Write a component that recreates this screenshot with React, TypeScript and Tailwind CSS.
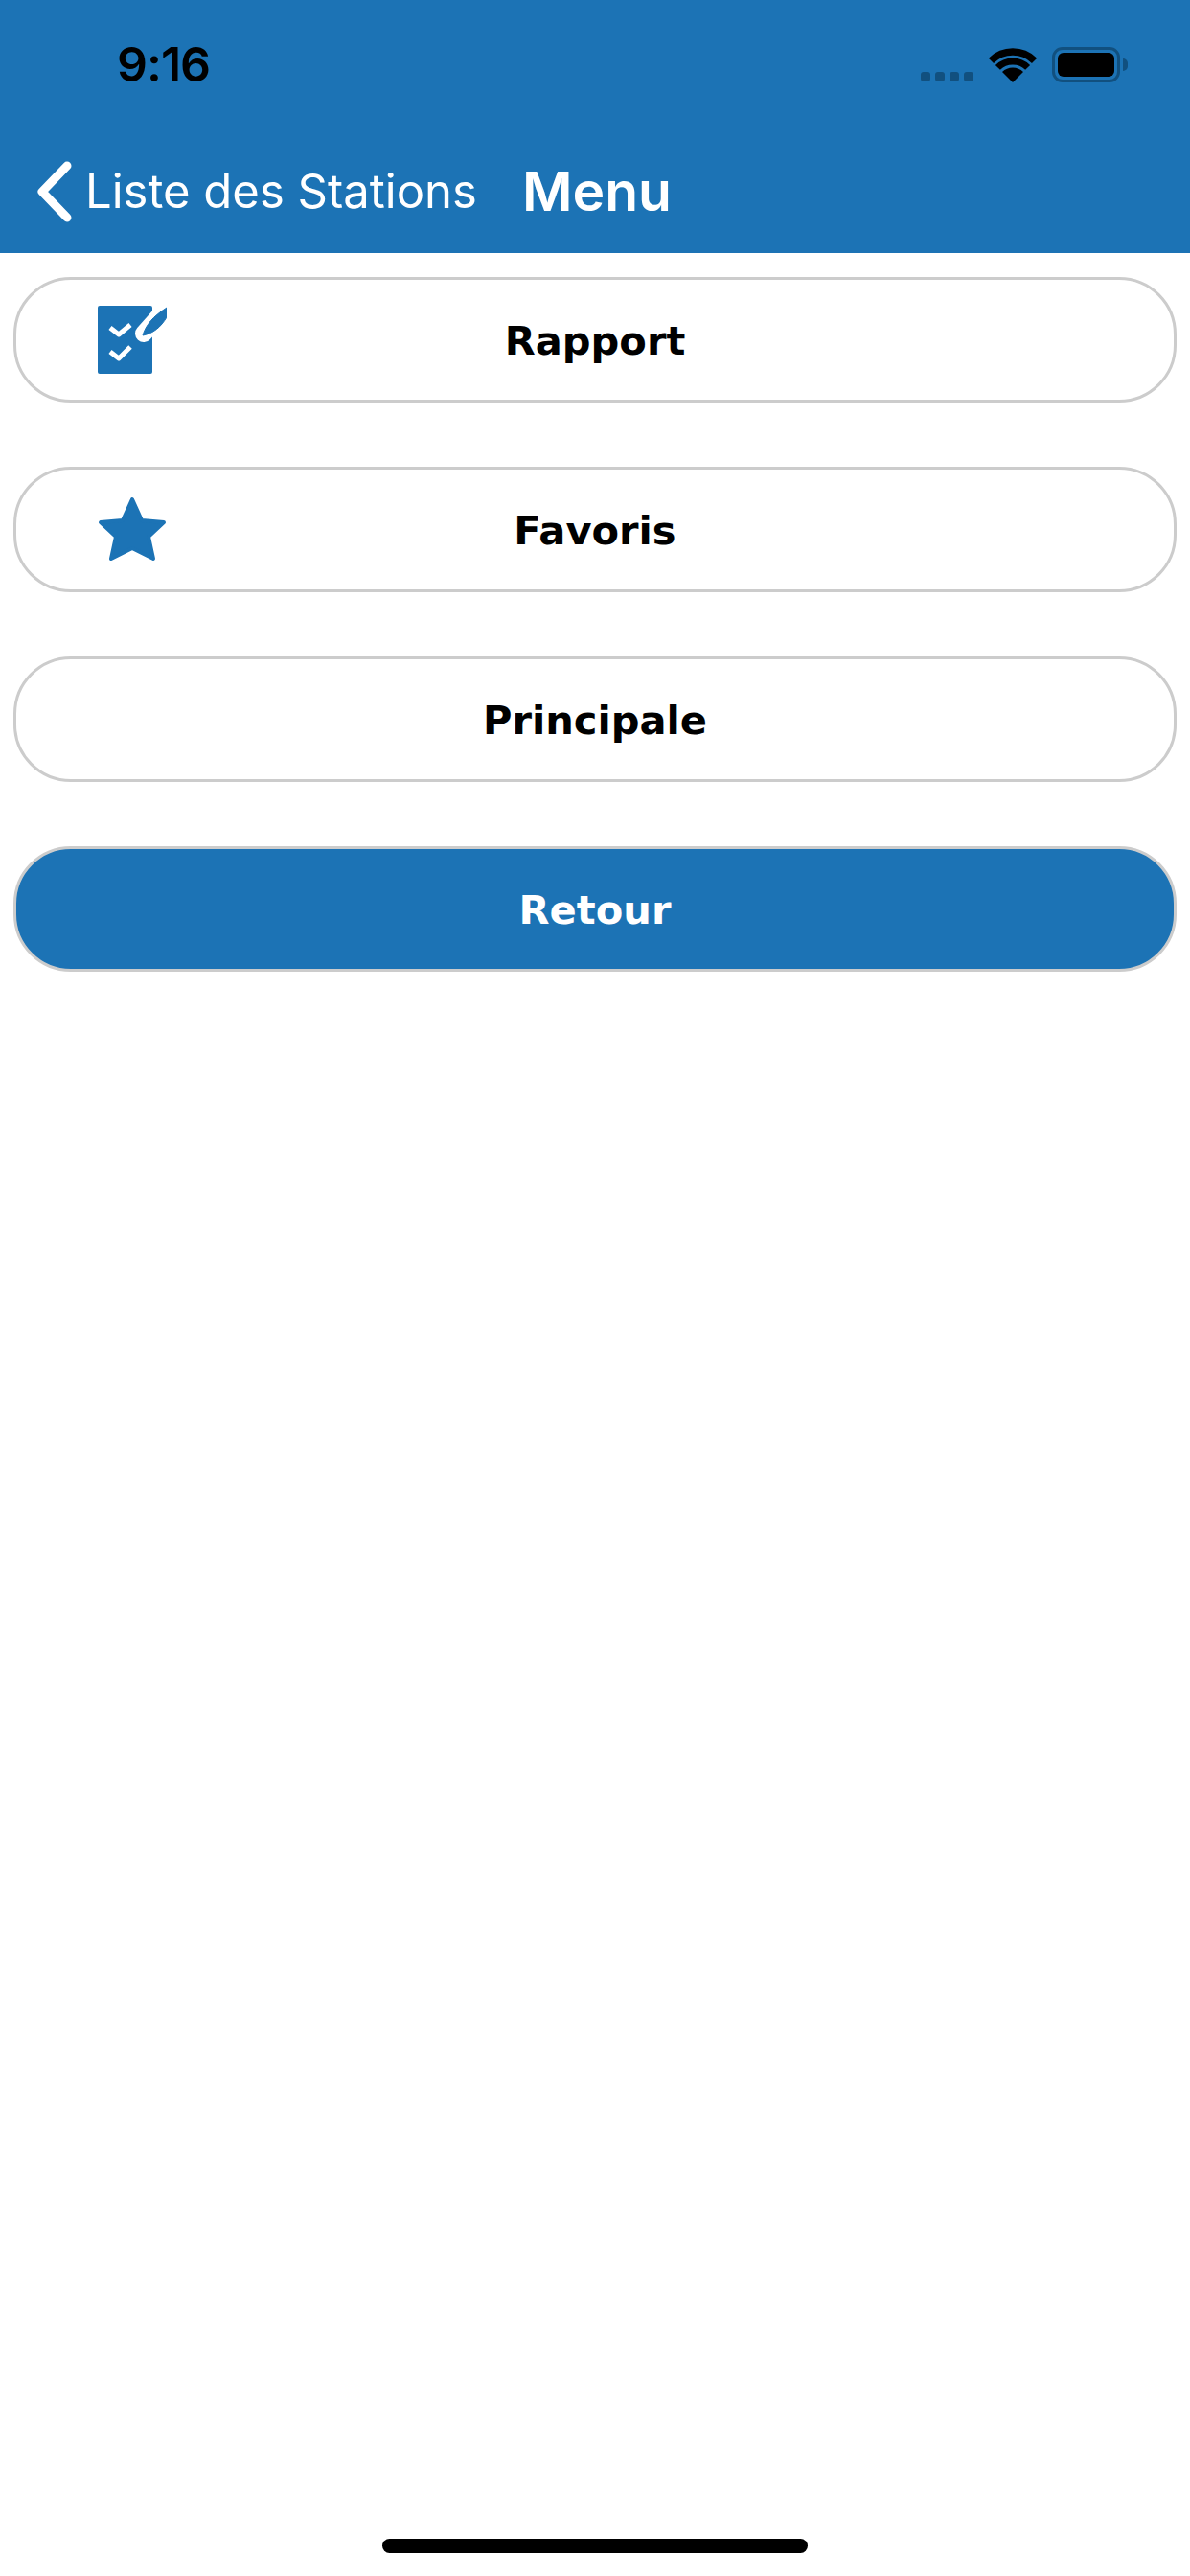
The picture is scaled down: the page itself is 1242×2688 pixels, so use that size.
// Station menu screen
function ReportIcon() {
  return (
    <svg width="72" height="71" viewBox="0 0 72 71" className="block">
      <rect x="0" y="0" width="57" height="71" rx="2" fill="#1c73b5" />
      <path d="M13 23 L22 30 L34 20" fill="none" stroke="#fff" strokeWidth="5" strokeLinejoin="round" />
      <path d="M13 48 L22 55 L34 43" fill="none" stroke="#fff" strokeWidth="5" strokeLinejoin="round" />
      <path d="M48 29 L64 11" fill="none" stroke="#fff" strokeWidth="18" strokeLinecap="round" />
      <path d="M47 31 C50 20 58 11 72 2 L72 12 C66 22 58 29 47 31 Z" fill="#1c73b5" stroke="#1c73b5" strokeWidth="1" />
    </svg>
  );
}

function StarIcon() {
  return (
    <svg width="72" height="69" viewBox="0 0 72 69" className="block">
      <polygon
        points="36,3 46,25 69,27 53,42 58,65 36,54 14,65 19,42 3,27 26,25"
        fill="#1c73b5"
        stroke="#1c73b5"
        strokeWidth="4"
        strokeLinejoin="round"
      />
    </svg>
  );
}

function WifiIcon() {
  return (
    <svg width="50" height="36" viewBox="0 0 50 36" className="block">
      <path d="M2.4 13.4 A32 32 0 0 1 47.6 13.4" fill="none" stroke="#000" strokeWidth="7.5" />
      <path d="M9.4 20.4 A22 22 0 0 1 40.6 20.4" fill="none" stroke="#000" strokeWidth="7" />
      <path d="M25 36 L14 25 A15.5 15.5 0 0 1 36 25 Z" fill="#000" />
    </svg>
  );
}

function Battery() {
  return (
    <div className="flex items-center gap-[3px]">
      <div className="w-[71px] h-[37px] rounded-[11px] border-[3px] border-[#11507f] p-[3px]">
        <div className="w-full h-full rounded-[6px] bg-black" />
      </div>
      <div className="w-[5px] h-[13px] rounded-r-full bg-[#11507f]" />
    </div>
  );
}

type MenuRow = {
  label: string;
  icon?: React.ReactNode;
  primary?: boolean;
};

const rows: MenuRow[] = [
  { label: "Rapport", icon: <ReportIcon /> },
  { label: "Favoris", icon: <StarIcon /> },
  { label: "Principale" },
  { label: "Retour", primary: true },
];

export default function App() {
  return (
    <div className="h-[2688px] bg-white flex flex-col font-['Inter',sans-serif]">
      <header className="h-[264px] bg-[#1c73b5] flex flex-col shrink-0">
        {/* status bar */}
        <div className="h-[136px] flex justify-between pl-[122px] pr-[65px]">
          <span className="mt-[39px] text-[50px] leading-[56px] font-semibold text-black tracking-[-1px]">
            9:16
          </span>
          <div className="flex items-end gap-[16px] h-[86px]">
            <div className="flex gap-[5px] mb-px">
              <span className="w-[10px] h-[10px] rounded-[3px] bg-[#11507f]" />
              <span className="w-[10px] h-[10px] rounded-[3px] bg-[#11507f]" />
              <span className="w-[10px] h-[10px] rounded-[3px] bg-[#11507f]" />
              <span className="w-[10px] h-[10px] rounded-[3px] bg-[#11507f]" />
            </div>
            <WifiIcon />
            <Battery />
          </div>
        </div>
        {/* navigation bar */}
        <div className="flex items-center h-[128px] pl-[39px]">
          <svg width="36" height="64" viewBox="0 0 36 64" className="block shrink-0">
            <path d="M31 5 L5 32 L31 59" fill="none" stroke="#fff" strokeWidth="9" strokeLinecap="round" strokeLinejoin="round" />
          </svg>
          <span className="ml-[14px] text-[49px] leading-[60px] text-white">Liste des Stations</span>
          <span className="ml-[47px] text-[57px] leading-[64px] font-semibold text-white">Menu</span>
        </div>
      </header>

      <main className="flex-1 flex flex-col gap-[67px] px-[14px] pt-[25px]">
        {rows.map((row) => (
          <button
            key={row.label}
            className={
              row.primary
                ? "h-[131px] rounded-[60px] border-[3px] border-[#cccccc] bg-[#1c73b5] text-white grid grid-cols-[1fr_auto_1fr] items-center"
                : "h-[131px] rounded-[60px] border-[3px] border-[#cccccc] bg-white text-black grid grid-cols-[1fr_auto_1fr] items-center"
            }
          >
            <span className="pl-[85px]">{row.icon}</span>
            <span className="pt-[3px] font-['DejaVu_Sans',sans-serif] font-bold text-[41.6px] leading-[50px]">
              {row.label}
            </span>
            <span />
          </button>
        ))}
      </main>

      <div className="flex justify-center pb-[24px]">
        <div className="w-[444px] h-[15px] rounded-full bg-black" />
      </div>
    </div>
  );
}
